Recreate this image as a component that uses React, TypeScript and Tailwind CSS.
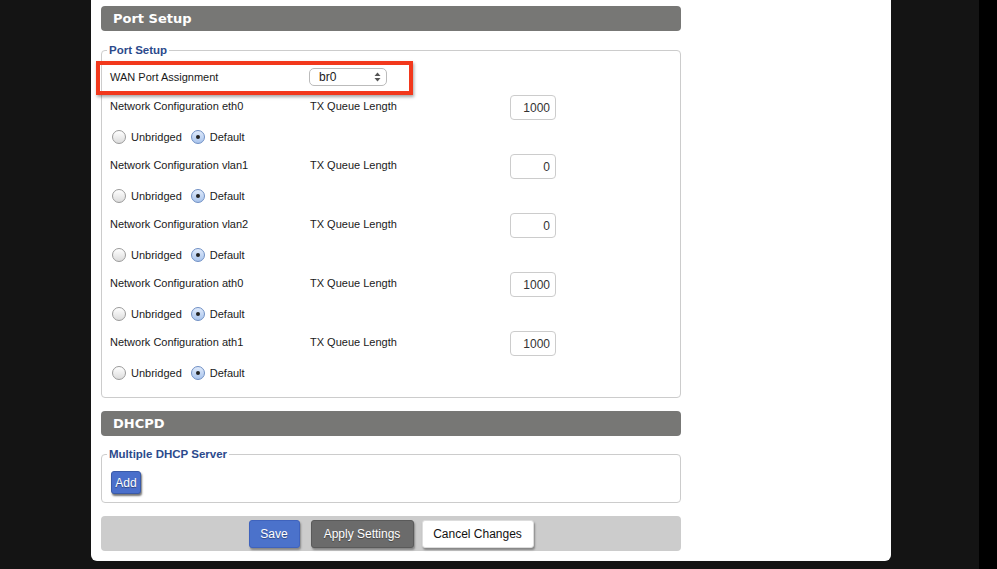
import React from 'react';

const ifaces = [
  { name: 'eth0', qlen: '1000' },
  { name: 'vlan1', qlen: '0' },
  { name: 'vlan2', qlen: '0' },
  { name: 'ath0', qlen: '1000' },
  { name: 'ath1', qlen: '1000' },
];

const body = { fontFamily: '"Liberation Sans", Arial, sans-serif' };
const heading = { fontFamily: '"DejaVu Sans", Verdana, sans-serif' };

const Radio = ({ checked, label }: { checked?: boolean; label: string }) => (
  <label className="flex items-center gap-[5px]">
    {checked ? (
      <span className="flex h-[14px] w-[14px] items-center justify-center rounded-full border border-[#6f8fc4] bg-gradient-to-b from-[#dfeafb] to-[#a9c4ec]">
        <span className="h-[4px] w-[4px] rounded-full bg-[#222]" />
      </span>
    ) : (
      <span className="h-[14px] w-[14px] rounded-full border border-[#9a9a9a] bg-gradient-to-b from-white to-[#dcdcdc]" />
    )}
    <span>{label}</span>
  </label>
);

const SectionBar = ({ title }: { title: string }) => (
  <div
    className="flex h-[25px] items-center rounded-[4px] bg-[#777775] pl-[12px] text-[13px] font-bold text-white"
    style={heading}
  >
    {title}
  </div>
);

const App = () => {
  return (
    <div className="flex h-[569px] w-[997px] overflow-hidden bg-[#141414] text-[11px] text-[#1a1a1a]" style={body}>
      <div className="relative ml-[91px] h-[561px] w-[800px] rounded-b-[6px] bg-white pl-[10px] pt-[6px]">
        <div className="w-[580px]">
          <SectionBar title="Port Setup" />

          <fieldset className="mt-[12px] rounded-[4px] border border-[#cccccc] pb-[7px] pl-[8px] pt-[11px]">
            <legend className="-ml-[3px] px-[2px] text-[11.5px] font-bold leading-[14px] text-[#2c4a8c]">Port Setup</legend>

            <div className="mb-[9px] flex h-[18px] items-center">
              <span className="w-[199px]">WAN Port Assignment</span>
              <div className="flex h-[18px] w-[78px] items-center justify-between rounded-[5px] border border-[#bbbbbb] bg-white pl-[9px] pr-[5px] text-[12px]">
                <span>br0</span>
                <svg width="7" height="10" viewBox="0 0 7 10">
                  <path d="M3.5 0.5 L6.5 4 L0.5 4 Z" fill="#555" />
                  <path d="M3.5 9.5 L6.5 6 L0.5 6 Z" fill="#555" />
                </svg>
              </div>
            </div>

            {ifaces.map((it) => (
              <div key={it.name}>
                <div className="flex h-[25px] items-start">
                  <span className="w-[200px] pt-[3px]">Network Configuration {it.name}</span>
                  <span className="w-[200px] pt-[3px]">TX Queue Length</span>
                  <input
                    readOnly
                    value={it.qlen}
                    className="h-[25px] w-[46px] rounded-[4px] border border-[#cccccc] bg-white pr-[5px] text-right text-[12px] text-[#333] outline-none"
                    style={body}
                  />
                </div>
                <div className="flex h-[34px] items-center gap-[9px] pl-[2px]">
                  <Radio label="Unbridged" />
                  <Radio checked label="Default" />
                </div>
              </div>
            ))}
          </fieldset>

          <div className="mt-[13px]">
            <SectionBar title="DHCPD" />
          </div>

          <fieldset className="mt-[11px] rounded-[4px] border border-[#cccccc] pb-[8px] pl-[9px] pt-[10px]">
            <legend className="-ml-[4px] px-[2px] text-[11.5px] font-bold leading-[14px] text-[#2c4a8c]">Multiple DHCP Server</legend>
            <button className="h-[23px] w-[30px] rounded-[3px] border border-[#3a5aa8] bg-[#4a6fcb] text-[12px] text-white shadow-[1px_2px_2px_rgba(0,0,0,0.55)] [text-shadow:0_1px_1px_rgba(0,0,0,0.4)]" style={body}>
              Add
            </button>
          </fieldset>

          <div className="mt-[13px] flex h-[35px] justify-center rounded-[4px] bg-[#cccccc] pt-[4px]">
            <button className="h-[28px] w-[51px] rounded-[3px] border border-[#3f63bd] bg-[#4b72cb] text-[12px] text-white shadow-[1px_2px_2px_rgba(0,0,0,0.35)] [text-shadow:0_1px_1px_rgba(0,0,0,0.4)]" style={body}>
              Save
            </button>
            <button className="ml-[11px] h-[28px] w-[103px] rounded-[3px] border border-[#5a5a5a] bg-[#6b6b6b] text-[12px] text-white shadow-[1px_2px_2px_rgba(0,0,0,0.35)] [text-shadow:0_1px_1px_rgba(0,0,0,0.4)]" style={body}>
              Apply Settings
            </button>
            <button className="ml-[8px] h-[28px] w-[112px] rounded-[3px] border border-[#dddddd] bg-white text-[12px] text-[#111] shadow-[1px_2px_2px_rgba(0,0,0,0.35)]" style={body}>
              Cancel Changes
            </button>
          </div>
        </div>

        <div className="absolute left-[5px] top-[61px] h-[34px] w-[317px] border-[4px] border-[#f2381c] shadow-[1px_2px_3px_rgba(0,0,0,0.35)]" />
      </div>
      <div className="ml-auto h-full w-[18px] bg-black" />
    </div>
  );
};

export default App;
